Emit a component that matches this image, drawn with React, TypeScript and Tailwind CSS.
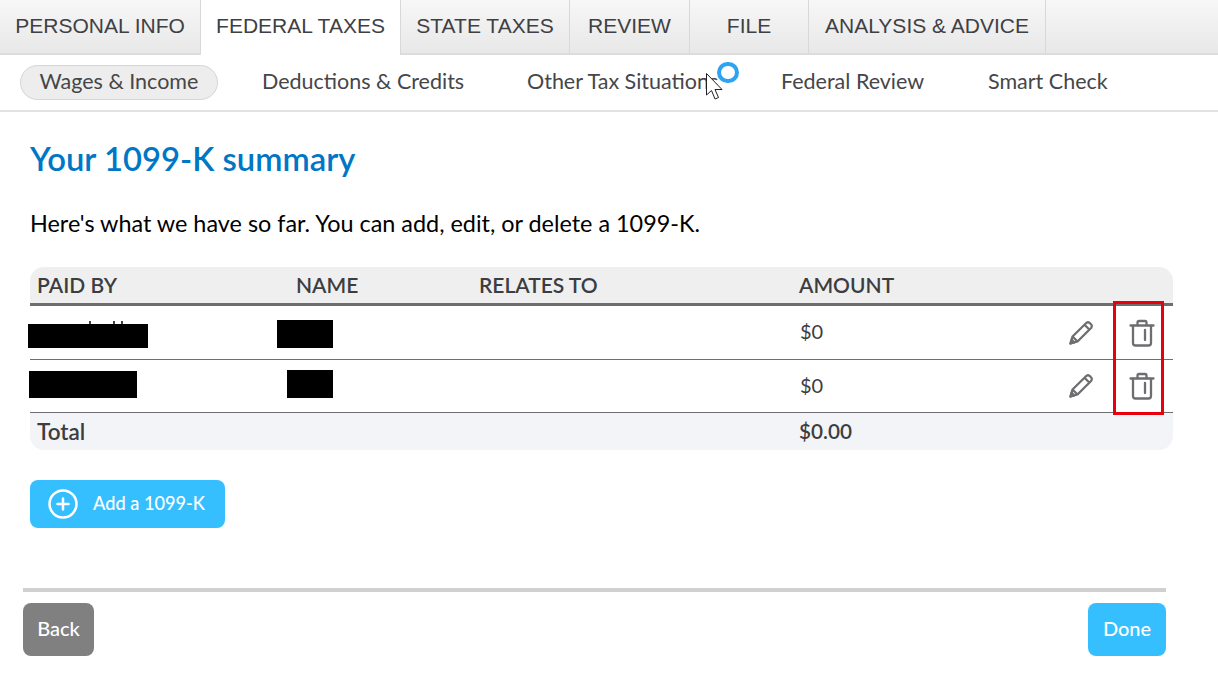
const tabs = [
  { label: "PERSONAL INFO", w: "w-[201px]" },
  { label: "FEDERAL TAXES", w: "w-[200px]", active: true },
  { label: "STATE TAXES", w: "w-[169px]" },
  { label: "REVIEW", w: "w-[120px]" },
  { label: "FILE", w: "w-[119px]" },
  { label: "ANALYSIS & ADVICE", w: "w-[237px]" },
];

const subTabs = [
  { label: "Wages & Income", w: "w-[242px]", active: true },
  { label: "Deductions & Credits", w: "w-[265px]" },
  { label: "Other Tax Situations", w: "w-[254px]" },
  { label: "Federal Review", w: "w-[207px]" },
  { label: "Smart Check", w: "w-[140px]" },
];

function Pencil() {
  return (
    <svg width="26" height="26" viewBox="0 0 26 26" fill="none" stroke="#6d6e71" strokeWidth="2.3" strokeLinejoin="round">
      <path d="M2.5 23.5 L4.5 16.5 L18.5 2.8 Q20 1.6 21.5 2.8 L23.4 4.7 Q24.5 6.2 23.3 7.7 L9.5 21.5 Z" />
      <path d="M16.5 4.8 L21.5 9.8" />
      <path d="M4.5 16.5 L9.5 21.5" />
      <path d="M2.5 23.5 L3.6 19.8 L6.2 22.4 Z" fill="#6d6e71" />
    </svg>
  );
}

function Trash() {
  return (
    <svg width="26" height="28" viewBox="0 0 26 28" fill="none" stroke="#6d6e71" strokeWidth="2.3" strokeLinecap="round" strokeLinejoin="round">
      <path d="M1.5 6.5 H24.5" />
      <path d="M8.5 6 V3.5 Q8.5 2 10 2 H16 Q17.5 2 17.5 3.5 V6" />
      <path d="M4 7 V24 Q4 26.5 6.5 26.5 H19.5 Q22 26.5 22 24 V7" />
      <path d="M16 11 V21" />
    </svg>
  );
}

function Row({ amount, last }: { amount: string; last?: boolean }) {
  return (
    <div className={`grid grid-cols-[770px_1fr_80px_50px] items-center border-b border-[#6d6e71] ${last ? "h-[53px]" : "h-[54px]"}`}>
      <div />
      <div className="pb-[3px] text-[20px] text-[#3d3d3d]">{amount}</div>
      <div className="flex justify-center pr-[5px]"><Pencil /></div>
      <div className="flex justify-center pr-[12px]"><Trash /></div>
    </div>
  );
}

export default function App() {
  return (
    <div className="relative w-[1218px] h-[677px] overflow-hidden bg-white font-['Lato',sans-serif]">
      <div className="flex h-[55px] bg-gradient-to-b from-[#f7f7f7] to-[#e8e8e8] border-b-2 border-[#dcdcdc]">
        {tabs.map((t) => (
          <div
            key={t.label}
            className={`${t.w} flex items-center justify-center pb-[1px] border-r border-[#d8d8d8] font-['Liberation_Sans',sans-serif] text-[21px] text-[#3f4044] ${t.active ? "bg-white h-[55px] self-start pb-[3px]" : ""}`}
          >
            {t.label}
          </div>
        ))}
      </div>

      <div className="flex items-center h-[57px] pl-[20px] border-b-2 border-[#e2e2e2]">
        {subTabs.map((t) => (
          <div key={t.label} className={`${t.w} shrink-0`}>
            <span
              className={`inline-flex items-center h-[35px] pb-[2px] whitespace-nowrap text-[21.5px] text-[#45464a] ${t.active ? "px-[18.5px] rounded-full bg-[#ededed] border border-[#d5d5d5]" : ""}`}
            >
              {t.label}
            </span>
          </div>
        ))}
      </div>

      <div className="pl-[30px] w-[1173px]">
        <h1 className="mt-[25px] text-[32.8px] leading-[44px] font-semibold text-[#0077c5]">Your 1099-K summary</h1>
        <p className="mt-[27px] text-[23.4px] leading-[30px] text-black">Here's what we have so far. You can add, edit, or delete a 1099-K.</p>

        <div className="mt-[29px]">
          <div className="grid grid-cols-[259px_183px_320px_1fr] items-center h-[39px] pl-[7px] bg-[#efefef] rounded-t-[14px] border-b-[3px] border-[#6d6e71] text-[21px] font-semibold text-[#3d3d40]">
            <div>PAID BY</div>
            <div>NAME</div>
            <div>RELATES TO</div>
            <div>AMOUNT</div>
          </div>
          <Row amount="$0" />
          <Row amount="$0" last />
          <div className="grid grid-cols-[762px_1fr] items-center h-[37px] pl-[7px] bg-[#f3f4f8] rounded-b-[14px] font-semibold text-[#3d3d40]">
            <div className="text-[22.5px]">Total</div>
            <div className="text-[20.7px]">$0.00</div>
          </div>
        </div>

        <button className="mt-[30px] flex items-center w-[195px] h-[48px] pl-[18px] rounded-[8px] bg-[#36bfff] text-white text-[18.2px] font-medium">
          <svg width="30" height="30" viewBox="0 0 30 30" fill="none" stroke="white" className="mr-[15px]">
            <circle cx="15" cy="15" r="13.5" strokeWidth="2.5" />
            <path d="M15 9.5 V20.5 M9.5 15 H20.5" strokeWidth="2.5" strokeLinecap="round" />
          </svg>
          Add a 1099-K
        </button>
      </div>

      <div className="ml-[23px] mt-[60px] w-[1143px] h-[4px] bg-[#d0d0d0]" />
      <div className="ml-[23px] mt-[11px] w-[1143px] flex justify-between">
        <button className="w-[71px] h-[53px] pb-[3px] rounded-[8px] bg-[#808080] text-white text-[20px] font-medium">Back</button>
        <button className="w-[78px] h-[53px] pb-[3px] rounded-[8px] bg-[#36bfff] text-white text-[20px] font-medium">Done</button>
      </div>

      {/* tops of the name letters that stick out above the redaction */}
      <div className="absolute left-[89px] top-[321px] w-[2px] h-[3px] bg-[#444]" />
      <div className="absolute left-[113px] top-[321px] w-[2px] h-[3px] bg-[#444]" />
      <div className="absolute left-[121px] top-[321px] w-[2px] h-[3px] bg-[#444]" />

      {/* redactions and annotation sit over the table */}
      <div className="absolute left-[28px] top-[324px] w-[120px] h-[24px] bg-black" />
      <div className="absolute left-[277px] top-[320px] w-[56px] h-[28px] bg-black" />
      <div className="absolute left-[29px] top-[371px] w-[108px] h-[27px] bg-black" />
      <div className="absolute left-[287px] top-[370px] w-[46px] h-[28px] bg-black" />
      <div className="absolute left-[1113px] top-[301px] w-[51px] h-[114px] border-[3px] border-[#e8000d]" />

      {/* busy cursor */}
      <div className="absolute left-[717px] top-[62px] w-[22px] h-[21px] rounded-full border-[4px] border-[#2ea3f2]" />
      <svg className="absolute left-[705px] top-[72px]" width="20" height="30" viewBox="0 0 20 30">
        <path d="M1.5 1.5 V23 L6.5 18.5 L10 27 L13.5 25.5 L10 17.5 L17 17.5 Z" fill="white" stroke="#222" strokeWidth="1" strokeLinejoin="round" />
      </svg>
    </div>
  );
}
